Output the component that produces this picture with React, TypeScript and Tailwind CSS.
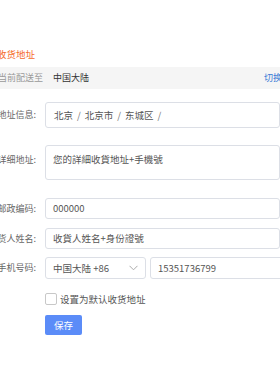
const font = { fontFamily: '"Noto Sans CJK SC", "Liberation Sans", sans-serif' };

function Label({ text, top = false }: { text: string; top?: boolean }) {
  return (
    <div
      className={`w-[58px] shrink-0 text-right text-[9px] text-[#666] whitespace-nowrap pr-[1px] ${top ? "pt-[8px]" : ""}`}
    >
      {text}
    </div>
  );
}

export default function App() {
  return (
    <div className="w-[280px] h-[380px] bg-white overflow-hidden" style={font}>
      {/* heading */}
      <div className="pt-[47px] -ml-[3px] text-[9.5px] leading-[14px] text-[#f56a2a]">收货地址</div>

      {/* ship-to band */}
      <div className="mt-[6px] h-[22px] w-[300px] bg-[#f5f5f5] flex items-center pr-[18px] text-[9px]">
        <span className="-ml-[2px] text-[#999] whitespace-nowrap">当前配送至</span>
        <span className="ml-[10px] text-[#333] whitespace-nowrap">中国大陆</span>
        <span className="flex-1" />
        <span className="text-[#3a7bd5] whitespace-nowrap">切换</span>
      </div>

      {/* form */}
      <div className="-ml-[21px] mt-[13px] flex flex-col">
        <div className="flex items-center gap-[8px]">
          <Label text="所在地址信息:" />
          <div className="w-[260px] h-[26px] border border-[#dcdfe6] rounded-[3px] flex items-center pl-[8px] text-[9.5px] text-[#555] whitespace-nowrap">
            北京 <span className="mx-[4px] text-[#777]">/</span> 北京市 <span className="mx-[4px] text-[#777]">/</span> 东城区 <span className="mx-[4px] text-[#777]">/</span>
          </div>
        </div>

        <div className="flex items-start gap-[8px] mt-[17px]">
          <Label text="详细地址:" top />
          <div className="w-[260px] h-[35px] border border-[#dcdfe6] rounded-[3px] pl-[7px] pt-[7px] text-[9.5px] leading-[12px] text-[#555] whitespace-nowrap">
            您的詳細收貨地址+手機號
          </div>
        </div>

        <div className="flex items-center gap-[8px] mt-[18px]">
          <Label text="邮政编码:" />
          <div className="w-[260px] h-[21px] border border-[#dcdfe6] rounded-[3px] flex items-center pl-[7px] text-[9.5px] text-[#555]">
            000000
          </div>
        </div>

        <div className="flex items-center gap-[8px] mt-[9px]">
          <Label text="收货人姓名:" />
          <div className="w-[260px] h-[21px] border border-[#dcdfe6] rounded-[3px] flex items-center pl-[7px] text-[9.5px] text-[#555] whitespace-nowrap">
            收貨人姓名+身份證號
          </div>
        </div>

        <div className="flex items-center gap-[8px] mt-[8px]">
          <Label text="手机号码:" />
          <div className="flex gap-[4px]">
            <div className="w-[101px] h-[22px] border border-[#dcdfe6] rounded-[3px] flex items-center pl-[7px] pr-[7px] text-[9.5px] text-[#555] whitespace-nowrap">
              中国大陆 +86
              <span className="flex-1" />
              <svg width="9" height="6" viewBox="0 0 9 6" fill="none" stroke="#aaa" strokeWidth="1">
                <path d="M0.5 0.8 L4.5 4.8 L8.5 0.8" />
              </svg>
            </div>
            <div className="w-[160px] h-[22px] border border-[#dcdfe6] rounded-[3px] flex items-center pl-[7px] text-[9.5px] text-[#555]">
              15351736799
            </div>
          </div>
        </div>

        <div className="flex items-center gap-[8px] mt-[13px]">
          <div className="w-[58px] shrink-0" />
          <div className="flex items-center gap-[3px]">
            <div className="w-[12px] h-[12px] border border-[#c8c8c8] rounded-[2px] bg-white" />
            <span className="text-[9.5px] text-[#555] whitespace-nowrap">设置为默认收货地址</span>
          </div>
        </div>

        <div className="flex items-center gap-[8px] mt-[9px]">
          <div className="w-[58px] shrink-0" />
          <div className="w-[37px] h-[20px] rounded-[2px] bg-[#5b8cf8] flex items-center justify-center text-[9.5px] text-white">
            保存
          </div>
        </div>
      </div>
    </div>
  );
}
